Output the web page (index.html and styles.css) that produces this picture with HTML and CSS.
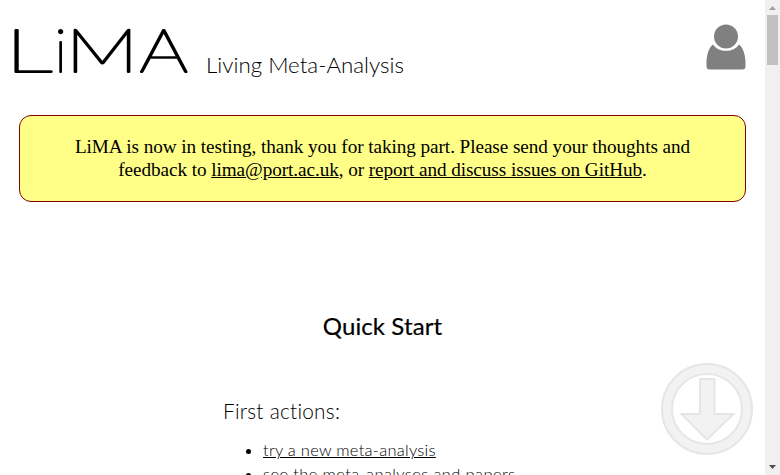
FILE: index.html
```html
<!DOCTYPE html>
<html lang="en">
<head>
<meta charset="utf-8">
<title>Living Meta-Analysis</title>
<link rel="stylesheet" href="styles.css">
</head>
<body>
<div class="page">
  <header class="header">
    <svg class="logo" width="180" height="50" viewBox="0 0 180 50">
      <text x="-7" y="46" textLength="47.500" lengthAdjust="spacingAndGlyphs">L</text>
      <text x="42.500" y="46">i</text>
      <text x="53.500" y="46" textLength="73" lengthAdjust="spacingAndGlyphs">M</text>
      <text x="127.500" y="46" textLength="48.500" lengthAdjust="spacingAndGlyphs">A</text>
    </svg>
    <svg class="tagline" width="200" height="30"><text x="0" y="20" textLength="198" lengthAdjust="spacingAndGlyphs">Living Meta-Analysis</text></svg>
    <svg class="user" width="40" height="46" viewBox="0 0 40 46">
      <circle cx="20" cy="12.500" r="12"/>
      <path d="M7 20.5C10 24.5 14 26.8 20 26.8S30 24.5 33 20.5C37 23.500 40 31 39.500 42Q39.500 45.500 36.500 45.500H3.500Q.5 45.500 .5 42C0 31 3 23.500 7 20.500Z"/>
    </svg>
  </header>
  <p class="notice">LiMA is now in testing, thank you for taking part. Please send your thoughts and feedback to <a href="#">lima@port.ac.uk</a>, or <a href="#">report and discuss issues on GitHub</a>.</p>
  <main>
    <h1>Quick Start</h1>
    <section class="actions">
      <h2>First actions:</h2>
      <ul>
        <li><a class="try" href="#">try a new meta-analysis</a></li>
        <li><a class="see" href="#">see the meta-analyses and papers</a></li>
      </ul>
    </section>
  </main>
  <svg class="down" width="92" height="92" viewBox="0 0 92 92">
    <circle class="ring" cx="46" cy="46" r="40"/>
    <circle cx="46" cy="46" r="45"/><circle cx="46" cy="46" r="35"/>
    <path d="M39 16H53.500V51H72.500L46 76.500L20.500 51H39Z"/>
  </svg>
</div>
<div class="scrollbar">
  <svg width="15" height="15"><path class="up" d="M4 10L7.500 6L11 10Z"/></svg>
  <div class="thumb"></div>
  <svg class="end" width="15" height="15"><path d="M4 5H11L7.500 9Z"/></svg>
</div>
</body>
</html>
```
FILE: styles.css
```css
* { box-sizing: border-box; }
body { margin: 0; height: 475px; display: grid; grid-template-columns: 765px 15px; overflow: hidden; background: #fff; color: #000; }
.page { height: 475px; overflow: hidden; position: relative; }
a { color: inherit; text-decoration: underline; }
.header { height: 115px; padding: 24px 19px 0 12px; display: flex; align-items: flex-start; }
.logo { margin-top: 2px; font: 100 59px Lato, sans-serif; stroke: #000; stroke-width: 2; stroke-linejoin: round; flex: none; overflow: visible; }
.tagline { margin: 29px 0 0 14px; font: 300 21px Lato, sans-serif; overflow: visible; }
.user { margin-left: auto; fill: #808080; }
.notice { margin: 0 19px; height: 87px; padding: 19px 40px 0; border: 1px solid #800000; border-radius: 12px; background: #ffff88; text-align: center; font: 19.2px/23px "Liberation Serif", serif; letter-spacing: -.065px; }
h1 { margin: 109px 0 0; text-align: center; font: 400 24px/29px Lato, sans-serif; letter-spacing: .1px; -webkit-text-stroke: .2px #000; }
.actions { margin: 58px 0 0 223px; font-family: Lato, sans-serif; font-weight: 300; }
h2 { margin: 0; font: 300 20.8px/26px Lato, sans-serif; letter-spacing: .25px; }
ul { margin: 14px 0 0; padding-left: 40px; font-size: 16.5px; line-height: 24px; }
.try { letter-spacing: .26px; }
.see { letter-spacing: .38px; }
.down { position: absolute; left: 661px; top: 363px; fill: none; stroke: #e6e6e6; stroke-width: 2; }
.down .ring { stroke: #f2f2f2; stroke-width: 10; }
.down path { fill: #f2f2f2; }
.scrollbar { height: 475px; display: flex; flex-direction: column; align-items: center; background: #f0f0f0; fill: #505050; }
.scrollbar svg { flex: none; }
.up { fill: #a0a0a0; }
.thumb { width: 11px; height: 50px; background: #c1c1c1; }
.end { margin-top: auto; }
```
